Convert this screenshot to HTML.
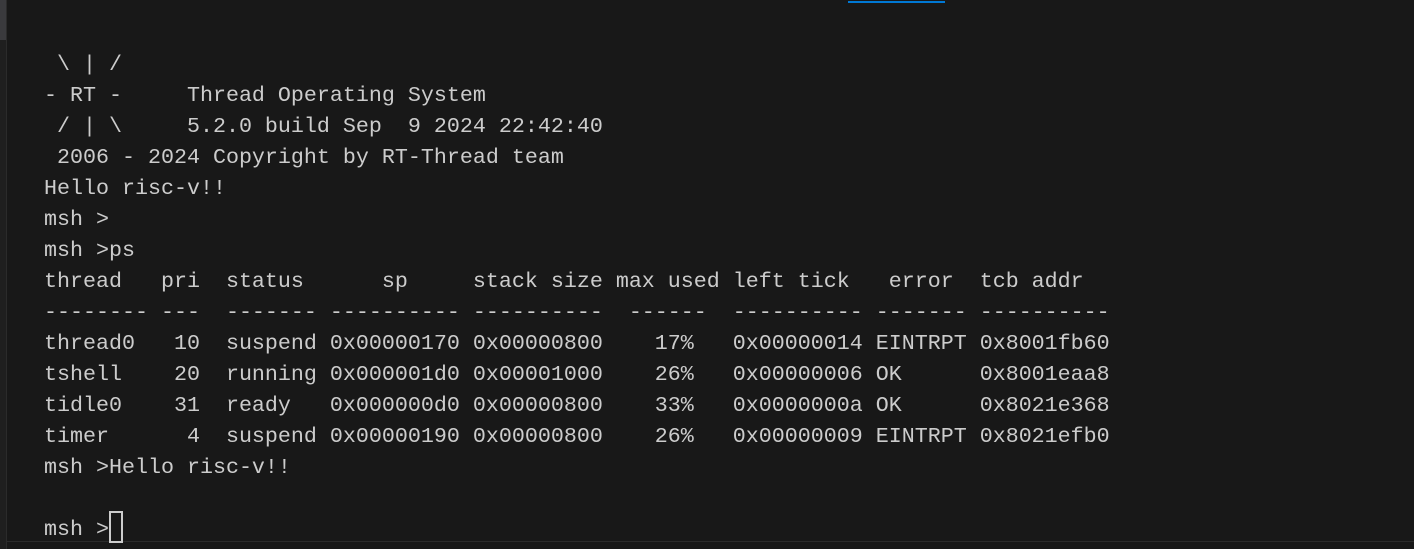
<!DOCTYPE html>
<html><head><meta charset="utf-8"><style>
html,body{margin:0;padding:0;background:#181818;width:1414px;height:549px;overflow:hidden;position:relative}
.l{position:absolute;left:0;top:0;width:6px;height:549px;background:#1f1f1f;border-right:1px solid #2b2b2b}
.sb{position:absolute;left:0;top:0;width:6px;height:40px;background:#3a3a3d}
.blue{position:absolute;left:848px;top:1px;width:97px;height:2px;background:#0078d4}
.bot{position:absolute;left:7px;right:0;top:541px;height:1px;background:#2b2b2b}
pre{position:absolute;left:44px;top:49px;margin:0;font-family:"Liberation Mono","DejaVu Sans Mono",monospace;font-size:21.67px;line-height:31px;color:#cccccc}
.cur{position:absolute;left:109px;top:511px;width:10px;height:28px;border:2px solid #cccccc}
</style></head><body>
<div class="l"></div><div class="sb"></div><div class="blue"></div><div class="bot"></div>
<pre> \ | /
- RT -     Thread Operating System
 / | \     5.2.0 build Sep  9 2024 22:42:40
 2006 - 2024 Copyright by RT-Thread team
Hello risc-v!!
msh >
msh >ps
thread   pri  status      sp     stack size max used left tick   error  tcb addr
-------- ---  ------- ---------- ----------  ------  ---------- ------- ----------
thread0   10  suspend 0x00000170 0x00000800    17%   0x00000014 EINTRPT 0x8001fb60
tshell    20  running 0x000001d0 0x00001000    26%   0x00000006 OK      0x8001eaa8
tidle0    31  ready   0x000000d0 0x00000800    33%   0x0000000a OK      0x8021e368
timer      4  suspend 0x00000190 0x00000800    26%   0x00000009 EINTRPT 0x8021efb0
msh >Hello risc-v!!

msh ></pre>
<div class="cur"></div>
</body></html>
